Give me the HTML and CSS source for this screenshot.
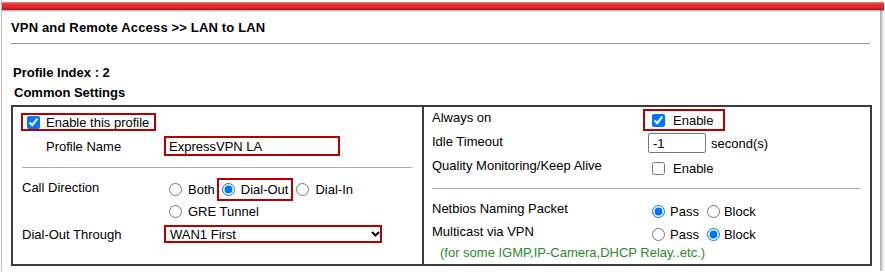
FILE: index.html
```html
<!DOCTYPE html>
<html lang="en">
<head>
  <meta charset="UTF-8" />
  <title>VPN and Remote Access - LAN to LAN</title>
  <link rel="stylesheet" href="styles.css">
</head>
<body>
  <div class="sheet">
    <div class="topbar"></div>
    <div class="content">
      <h1 class="title">VPN and Remote Access &gt;&gt; LAN to LAN</h1>
      <div class="index">Profile Index : 2</div>
      <div class="section">Common Settings</div>

      <div class="box">
        <div class="col col-left">
          <div class="row r-enable">
            <label class="hl hl-profile"><input type="checkbox" checked>Enable this profile</label>
          </div>
          <div class="row r-name">
            <span class="lbl lbl-indent">Profile Name</span>
            <input class="name-input" type="text" value="ExpressVPN LA">
          </div>
          <hr class="sep sep-left">
          <div class="row r-call">
            <span class="lbl lbl-top">Call Direction</span>
            <div class="opts">
              <div class="optline">
                <label class="opt"><input type="radio" name="dir">Both</label>
                <label class="opt hl hl-radio"><input type="radio" name="dir" checked>Dial-Out</label>
                <label class="opt opt-after"><input type="radio" name="dir">Dial-In</label>
              </div>
              <div class="optline line2">
                <label class="opt"><input type="radio" name="dir">GRE Tunnel</label>
              </div>
            </div>
          </div>
          <div class="row r-through">
            <span class="lbl">Dial-Out Through</span>
            <div class="select-wrap">
              <select class="wan-select">
                <option>WAN1 First</option>
                <option>WAN2 First</option>
              </select>
              <svg class="chev" width="9" height="6" viewBox="0 0 9 6"><path d="M1 1 L4.5 4.5 L8 1" fill="none" stroke="#000" stroke-width="2"/></svg>
            </div>
          </div>
        </div>

        <div class="col col-right">
          <div class="rrow r-always">
            <span class="rlbl">Always on</span>
            <label class="hl hl-always"><input type="checkbox" checked>Enable</label>
          </div>
          <div class="rrow r-idle">
            <span class="rlbl">Idle Timeout</span>
            <input class="idle-input" type="text" value="-1">
            <span class="unit">second(s)</span>
          </div>
          <div class="rrow r-quality">
            <span class="rlbl">Quality Monitoring/Keep Alive</span>
            <label class="chk"><input type="checkbox">Enable</label>
          </div>
          <hr class="sep sep-right">
          <div class="rrow r-netbios">
            <span class="rlbl">Netbios Naming Packet</span>
            <label class="rb"><input type="radio" name="netbios" checked>Pass</label>
            <label class="rb rb-block"><input type="radio" name="netbios">Block</label>
          </div>
          <div class="rrow r-multi">
            <span class="rlbl">Multicast via VPN</span>
            <label class="rb"><input type="radio" name="multi">Pass</label>
            <label class="rb rb-block"><input type="radio" name="multi" checked>Block</label>
          </div>
          <div class="note">(for some IGMP,IP-Camera,DHCP Relay..etc.)</div>
        </div>
      </div>
    </div>
  </div>
</body>
</html>
```

FILE: styles.css
```css
* {
  box-sizing: border-box;
}
body {
  margin: 0;
  background: #fff;
  font-family: 'Liberation Sans', Arial, sans-serif;
  font-size: 13px;
  color: #000;
  overflow: hidden;
}
.sheet {
  width: 879px;
  height: 271px;
  margin-left: 1px;
  border-left: 1px solid #c4c4c4;
  background: #fff;
  box-shadow: 2px 2px 3px rgba(0, 0, 0, 0.35);
  overflow: visible;
  padding-top: 2px;
}
.topbar {
  height: 8px;
  width: 882px;
  background: linear-gradient(#f58a8a 0, #e53535 25%, #db2626 70%, #a81414 100%);
  box-shadow: 0 1px 2px rgba(0, 0, 0, 0.4);
}
.content {
  padding-left: 9px;
}
.title {
  margin: 10px 0 0;
  width: 859px;
  font-size: 13px;
  line-height: 15px;
  font-weight: bold;
  letter-spacing: 0.16px;
  padding-bottom: 8px;
  border-bottom: 1px solid #999;
}
.index, .section {
  font-weight: bold;
  line-height: 20px;
}
.index {
  margin-top: 19px;
  padding-left: 2px;
}
.section {
  padding-left: 3px;
}
.box {
  margin-top: 2px;
  width: 861px;
  height: 161px;
  border: 2px solid #3c3c3c;
  display: grid;
  grid-template-columns: 411px 1fr;
}
.col-left {
  border-right: 2px solid #3c3c3c;
  padding: 6px 10px 0 9px;
}
.col-right {
  padding: 2px 10px 0 8px;
}

/* red highlight boxes */
.hl {
  display: inline-flex;
  align-items: center;
  border: 2px solid #b40000;
}
.hl-profile {
  margin-left: -1px;
  height: 18px;
  padding: 0 5px 0 4px;
}
.hl-profile input {
  margin: 0 6px 0 0;
}
.hl-radio {
  height: 23px;
  margin-left: 2px;
  padding-right: 3px;
}
.hl-always {
  height: 22px;
  padding: 0 10px 0 7px;
}
.hl-always input {
  margin: 0 8px 0 0;
}

/* left column */
.row {
  display: flex;
  align-items: center;
}
.lbl {
  width: 142px;
  flex: none;
}
.lbl-indent {
  padding-left: 24px;
}
.lbl-top {
  align-self: flex-start;
  line-height: 20px;
}
.r-name {
  margin-top: 5px;
  height: 20px;
}
.name-input {
  width: 176px;
  height: 20px;
  border: 2px solid #b40000;
  padding: 0 0 0 3px;
  font: inherit;
  color: #000;
  outline: none;
}
.sep {
  border: 0;
  border-top: 1px solid #aaa;
  height: 0;
}
.sep-left {
  margin: 11px 0 0;
}
.r-call {
  margin-top: 10px;
  align-items: flex-start;
}
.opts {
  padding-left: 5px;
}
.optline {
  display: flex;
  align-items: center;
  height: 23px;
}
.line2 {
  height: 21px;
}
.opt {
  display: inline-flex;
  align-items: center;
}
.opt input {
  margin: 0 6px 0 0;
}
.hl-radio input {
  margin-left: 3px;
}
.opt-after input {
  margin-left: 3px;
}
.r-through {
  margin-top: 3px;
}
.select-wrap {
  position: relative;
  width: 218px;
  height: 18px;
}
.wan-select {
  appearance: none;
  width: 218px;
  height: 18px;
  border: 2px solid #b40000;
  border-radius: 0;
  background: #fff;
  padding: 0 0 0 4px;
  font: inherit;
  color: #000;
}
.chev {
  position: absolute;
  left: 207px;
  top: 6px;
}

/* right column */
.rrow {
  display: flex;
  align-items: center;
  height: 22px;
}
.rlbl {
  width: 211px;
  flex: none;
  align-self: flex-start;
  line-height: 18px;
}
.r-idle {
  margin-top: 2px;
  height: 20px;
}
.idle-input {
  margin-left: 5px;
  width: 58px;
  height: 20px;
  border: 1px solid #767676;
  border-radius: 2px;
  padding: 0 0 0 4px;
  font: inherit;
  color: #000;
}
.unit {
  margin-left: 5px;
}
.r-quality {
  margin-top: 4px;
}
.chk {
  display: inline-flex;
  align-items: center;
  margin-left: 9px;
}
.chk input {
  margin: 0 8px 0 0;
}
.sep-right {
  margin: 9px 0 0;
}
.r-netbios {
  margin-top: 11px;
}
.r-multi {
  margin-top: 1px;
}
.rb {
  display: inline-flex;
  align-items: center;
  margin-left: 9px;
}
.rb input {
  margin: 0 5px 0 0;
}
.rb-block {
  margin-left: 8px;
}
.rb-block input {
  margin-right: 4px;
}
.note {
  padding-left: 8px;
  line-height: 16px;
  color: #2a8a2a;
}
```
